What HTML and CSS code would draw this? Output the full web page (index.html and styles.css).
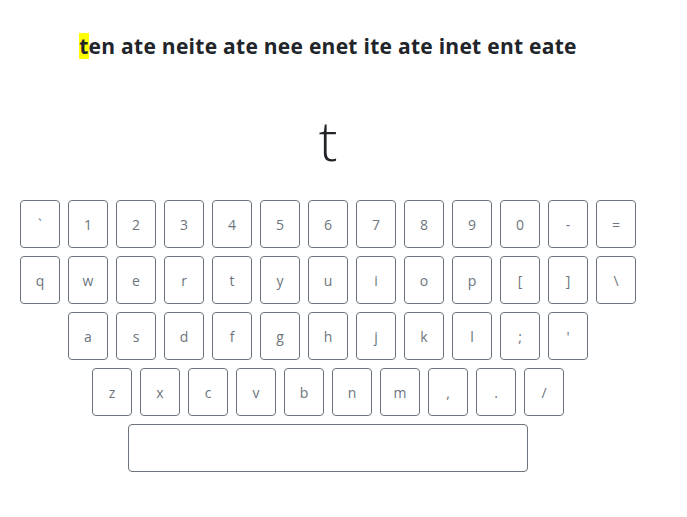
FILE: index.html
```html
<!DOCTYPE html>
<html>
<head>
<meta charset="utf-8">
<link rel="stylesheet" href="styles.css">
</head>
<body>
<div class="page">
  <div class="title"><span class="cur">t</span>en ate neite ate nee enet ite ate inet ent eate</div>
  <div class="big">t</div>
  <div class="keyboard">
    <div class="row">
      <div class="key">`</div><div class="key">1</div><div class="key">2</div><div class="key">3</div><div class="key">4</div><div class="key">5</div><div class="key">6</div><div class="key">7</div><div class="key">8</div><div class="key">9</div><div class="key">0</div><div class="key">-</div><div class="key">=</div>
    </div>
    <div class="row">
      <div class="key">q</div><div class="key">w</div><div class="key">e</div><div class="key">r</div><div class="key">t</div><div class="key">y</div><div class="key">u</div><div class="key">i</div><div class="key">o</div><div class="key">p</div><div class="key">[</div><div class="key">]</div><div class="key">\</div>
    </div>
    <div class="row">
      <div class="key">a</div><div class="key">s</div><div class="key">d</div><div class="key">f</div><div class="key">g</div><div class="key">h</div><div class="key">j</div><div class="key">k</div><div class="key">l</div><div class="key">;</div><div class="key">'</div>
    </div>
    <div class="row">
      <div class="key">z</div><div class="key">x</div><div class="key">c</div><div class="key">v</div><div class="key">b</div><div class="key">n</div><div class="key">m</div><div class="key">,</div><div class="key">.</div><div class="key">/</div>
    </div>
    <div class="row">
      <div class="key space"></div>
    </div>
  </div>
</div>
</body>
</html>
```

FILE: styles.css
```css
html, body {
  margin: 0;
  padding: 0;
  background: #fff;
}
body {
  font-family: "Open Sans", "Segoe UI", sans-serif;
  color: #212529;
}
.page {
  width: 656px;
  display: flex;
  flex-direction: column;
  align-items: center;
}
.title {
  margin-top: 33px;
  font-size: 21px;
  font-weight: 700;
  letter-spacing: 0.27px;
  line-height: 26px;
  height: 26px;
  white-space: nowrap;
}
.cur {
  display: inline-block;
  background: #ffff00;
  line-height: 26px;
}
.big {
  margin-top: 40px;
  font-size: 56px;
  font-weight: 300;
  line-height: 80px;
  height: 80px;
}
.keyboard {
  margin-top: 21px;
  display: flex;
  flex-direction: column;
  align-items: center;
  gap: 8px;
}
.row {
  display: flex;
  gap: 8px;
  justify-content: center;
}
.key {
  box-sizing: border-box;
  width: 40px;
  height: 48px;
  border: 1px solid #6c757d;
  border-radius: 4px;
  color: #6c757d;
  font-size: 14px;
  display: flex;
  align-items: center;
  justify-content: center;
}
.key.space {
  width: 400px;
}
```
